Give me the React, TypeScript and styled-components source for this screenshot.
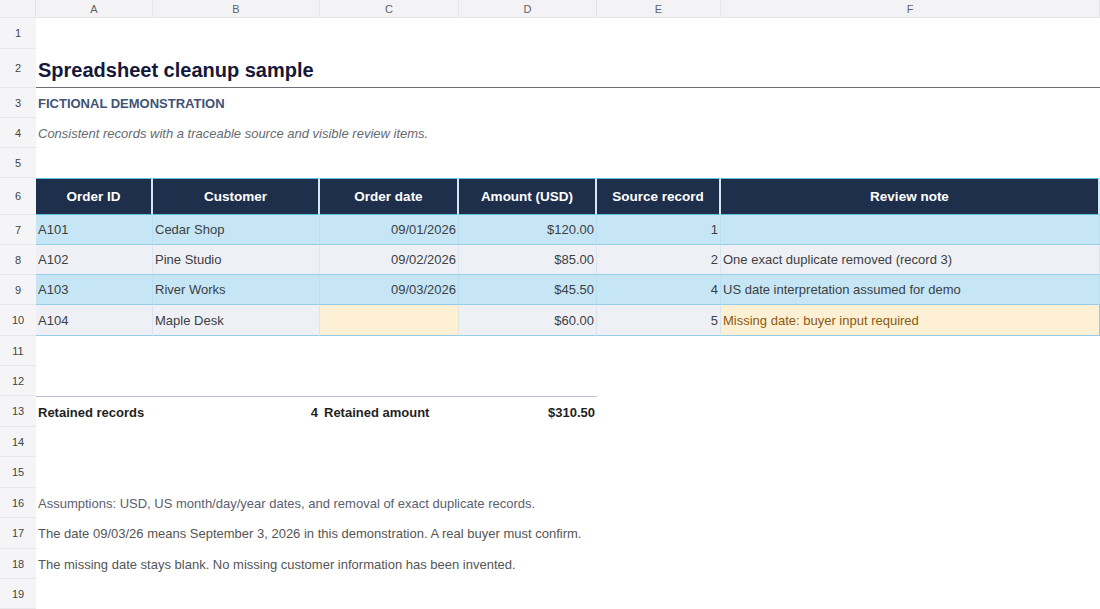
import React from "react";
import styled, { createGlobalStyle, css } from "styled-components";

const Global = createGlobalStyle`
  body { margin: 0; font-family: "Liberation Sans", Arial, sans-serif; background: #fff; }
`;

const ROWS = [18, 31, 39, 30, 30, 30, 37, 30, 30, 30, 31, 30, 30, 31, 30, 31, 30, 31, 30, 30];

const Sheet = styled.div`
  display: grid;
  grid-template-columns: 36px 117px 167px 139px 138px 124px 1fr;
  grid-template-rows: ${ROWS.map((r) => r + "px").join(" ")};
  width: 1100px;
  height: 609px;
  overflow: hidden;
  font-size: 13px;
  color: #3c4043;
`;

const ColHead = styled.div`
  background: #f3f3f6;
  border-right: 1px solid #e6e6ea;
  border-bottom: 1px solid #e3e3e8;
  display: flex;
  align-items: center;
  justify-content: center;
  font-size: 11px;
  color: #5f6368;
`;

const RowHead = styled.div`
  background: #f5f5f8;
  border-bottom: 1px solid #e8e8ec;
  display: flex;
  align-items: center;
  justify-content: center;
  font-size: 11px;
  color: #444;
`;

type CellProps = {
  $span?: number;
  $align?: "left" | "right" | "center";
  $bg?: string;
  $weight?: number;
  $color?: string;
  $size?: number;
  $italic?: boolean;
  $head?: boolean;
  $border?: string;
  $top?: string;
  $bottom?: string;
};

const Cell = styled.div<CellProps>`
  grid-column: span ${(p) => p.$span || 1};
  display: flex;
  align-items: center;
  justify-content: ${(p) => (p.$align === "right" ? "flex-end" : p.$align === "center" ? "center" : "flex-start")};
  padding: 0 2px;
  white-space: nowrap;
  overflow: visible;
  background: ${(p) => p.$bg || "transparent"};
  font-weight: ${(p) => p.$weight || 400};
  color: ${(p) => p.$color || "#3c4043"};
  font-size: ${(p) => p.$size || 13}px;
  font-style: ${(p) => (p.$italic ? "italic" : "normal")};
  ${(p) => p.$top && css`border-top: ${p.$top};`}
  ${(p) => p.$bottom && css`border-bottom: ${p.$bottom};`}
  ${(p) =>
    p.$head &&
    css`
      background: #1e2f4b;
      color: #fff;
      border-right: 2px solid #cfe9f2;
      border-top: 1px solid #5bc0e0;
      border-bottom: 1px solid #5bc0e0;
      padding: 0;
    `}
  ${(p) => p.$border && css`border-bottom: 1px solid ${p.$border}; border-right: 1px solid ${p.$border}44;`}
`;

const cols = ["", "A", "B", "C", "D", "E", "F"];
const heads = ["Order ID", "Customer", "Order date", "Amount (USD)", "Source record", "Review note"];
const data = [
  ["A101", "Cedar Shop", "09/01/2026", "$120.00", "1", ""],
  ["A102", "Pine Studio", "09/02/2026", "$85.00", "2", "One exact duplicate removed (record 3)"],
  ["A103", "River Works", "09/03/2026", "$45.50", "4", "US date interpretation assumed for demo"],
  ["A104", "Maple Desk", "", "$60.00", "5", "Missing date: buyer input required"],
];

const Empty = () => (
  <>
    {[0, 1, 2, 3, 4, 5].map((i) => (
      <Cell key={i} />
    ))}
  </>
);

export default function App() {
  const rn = (n: number) => <RowHead key={"r" + n}>{n}</RowHead>;
  return (
    <>
      <Global />
      <Sheet>
        {cols.map((c, i) => (
          <ColHead key={i}>{c}</ColHead>
        ))}
        {rn(1)}
        <Empty />
        {rn(2)}
        <Cell $span={6} $size={20} $weight={700} $color="#16183a" $bottom="1px solid #6b6e75" style={{ paddingTop: 4 }}>
          Spreadsheet cleanup sample
        </Cell>
        {rn(3)}
        <Cell $span={6} $weight={700} $color="#3f5474">FICTIONAL DEMONSTRATION</Cell>
        {rn(4)}
        <Cell $span={6} $italic $color="#666a70">Consistent records with a traceable source and visible review items.</Cell>
        {rn(5)}
        <Empty />
        {rn(6)}
        {heads.map((h) => (
          <Cell key={h} $head $align="center" $weight={700} $size={13.5}>
            {h}
          </Cell>
        ))}
        {data.map((r, i) => {
          const bg = i % 2 === 0 ? "#c6e6f6" : "#eff0f5";
          const missing = i === 3;
          return (
            <React.Fragment key={i}>
              {rn(7 + i)}
              <Cell $bg={bg} $border="#93cde9">{r[0]}</Cell>
              <Cell $bg={bg} $border="#93cde9" style={{ paddingLeft: 2 }}>{r[1]}</Cell>
              <Cell $bg={missing ? "#fdf0d4" : bg} $border="#93cde9" $align="right">{r[2]}</Cell>
              <Cell $bg={bg} $border="#93cde9" $align="right">{r[3]}</Cell>
              <Cell $bg={bg} $border="#93cde9" $align="right">{r[4]}</Cell>
              <Cell $bg={missing ? "#fdf0d4" : bg} $border="#93cde9" $color={missing ? "#8a5a12" : undefined} style={missing ? { borderRight: "1px solid #93cde9" } : undefined}>
                {r[5]}
              </Cell>
            </React.Fragment>
          );
        })}
        {rn(11)}
        <Empty />
        {rn(12)}
        <Empty />
        {rn(13)}
        <Cell $weight={700} $color="#1f1f1f" $top="1px solid #b9c3d3">Retained records</Cell>
        <Cell $weight={700} $color="#1f1f1f" $align="right" $top="1px solid #b9c3d3">4</Cell>
        <Cell $weight={700} $color="#1f1f1f" $top="1px solid #b9c3d3" style={{ paddingLeft: 4 }}>Retained amount</Cell>
        <Cell $weight={700} $color="#1f1f1f" $align="right" $top="1px solid #b9c3d3">$310.50</Cell>
        <Cell />
        <Cell />
        {rn(14)}
        <Empty />
        {rn(15)}
        <Empty />
        {rn(16)}
        <Cell $span={6} $color="#5a6070">Assumptions: USD, US month/day/year dates, and removal of exact duplicate records.</Cell>
        {rn(17)}
        <Cell $span={6} $color="#555">The date 09/03/26 means September 3, 2026 in this demonstration. A real buyer must confirm.</Cell>
        {rn(18)}
        <Cell $span={6} $color="#555">The missing date stays blank. No missing customer information has been invented.</Cell>
        {rn(19)}
        <Empty />
      </Sheet>
    </>
  );
}
